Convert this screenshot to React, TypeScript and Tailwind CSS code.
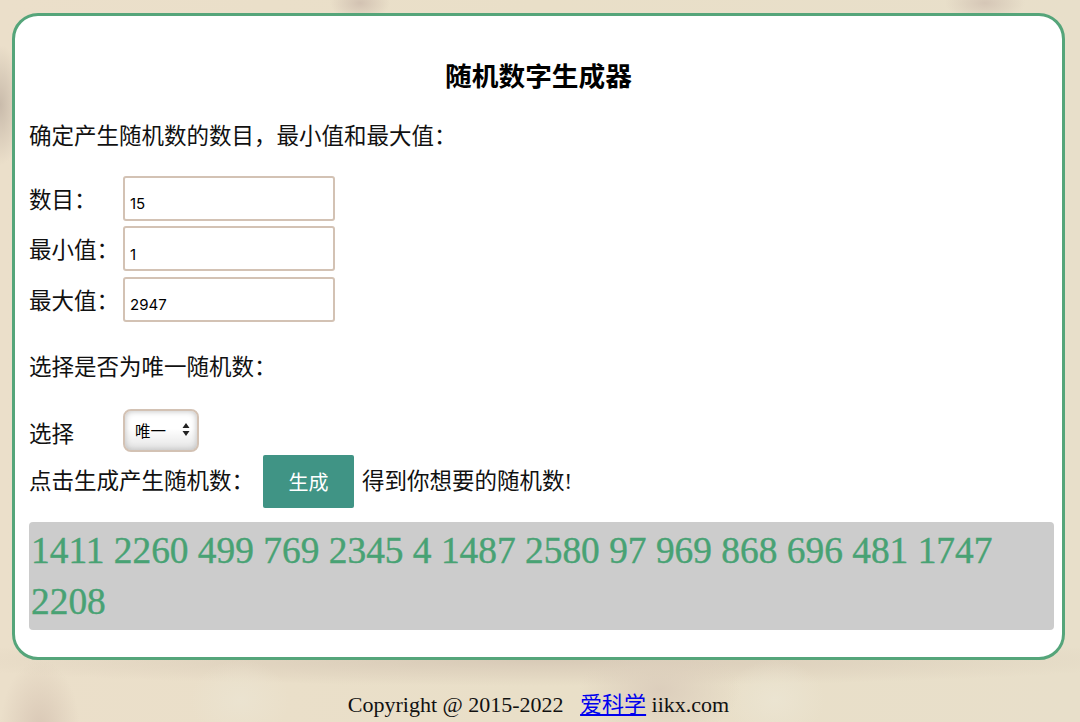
const serif = "font-['Liberation_Serif','Noto_Sans_CJK_SC',serif]";

function Field({ label, value }: { label: string; value: string }) {
  return (
    <div className="flex items-center h-[50.5px]">
      <label className="w-[94px] text-[22.5px] leading-none mt-[5px]">{label}</label>
      <input
        defaultValue={value}
        className="w-[212px] h-[45px] bg-white border-2 border-[#d3c2b4] rounded-[3px] px-[5px] pt-[11px] text-[15px] text-black font-['Inter','Noto_Sans',sans-serif] outline-none"
      />
    </div>
  );
}

export default function App() {
  return (
    <div
      className={`${serif} min-h-[722px] h-[722px] overflow-hidden text-[#111] pt-[13px] px-[12px] bg-[#e9dfc9] bg-[radial-gradient(ellipse_24px_60px_at_0px_105px,#c9bbab,transparent),radial-gradient(ellipse_30px_18px_at_360px_3px,#d2c2b2,transparent),radial-gradient(ellipse_40px_18px_at_985px_3px,#d5c6b6,transparent),radial-gradient(ellipse_40px_70px_at_40px_730px,#d9c8b6,transparent),radial-gradient(ellipse_80px_50px_at_660px_690px,#dccebc,transparent),radial-gradient(ellipse_50px_40px_at_240px_700px,#ebe3d0,transparent),radial-gradient(ellipse_50px_40px_at_775px_700px,#ebe4d1,transparent),radial-gradient(ellipse_620px_26px_at_540px_660px,#d8cab7,transparent),linear-gradient(90deg,#ebdfca,#e9dfc8_50%,#e8dfca)]`}
    >
      <div className="w-[1053px] h-[647px] bg-white border-[3px] border-[#55a57a] rounded-[26px] px-[14px]">
        <h1 className="text-[26.7px] font-bold text-center leading-none text-black pt-[48px]">随机数字生成器</h1>
        <p className="text-[22.5px] leading-none mt-[35px]">确定产生随机数的数目，最小值和最大值：</p>

        <div className="mt-[25px]">
          <Field label="数目：" value="15" />
          <Field label="最小值：" value="1" />
          <Field label="最大值：" value="2947" />
        </div>

        <p className="text-[22.5px] leading-none mt-[32px]">选择是否为唯一随机数：</p>

        <div className="flex items-center mt-[30px] h-[42px]">
          <label className="w-[94px] text-[22.5px] leading-none mt-[10px]">选择</label>
          <div className="relative w-[76px] h-[43px]">
            <select className="appearance-none w-full h-full rounded-[8px] border-2 border-[#d3c2b4] pl-[10px] text-[15.5px] text-black font-['Noto_Sans_CJK_SC',sans-serif] outline-none bg-[linear-gradient(180deg,#ffffff_45%,#e4e4e4)] shadow-[inset_0_0_6px_#bbb]">
              <option>唯一</option>
              <option>可重复</option>
            </select>
            <svg className="absolute right-[9px] top-[13px] pointer-events-none" width="8" height="15" viewBox="0 0 8 15">
              <path d="M4 1 7.5 6H.5zM4 14 .5 9h7z" fill="#222" />
            </svg>
          </div>
        </div>

        <div className="flex items-center mt-[4px] h-[53px]">
          <span className="w-[234px] text-[22.5px] leading-none mt-[2px]">点击生成产生随机数：</span>
          <button className="w-[91px] h-[53px] bg-[#409485] text-white rounded-[2px] text-[20px] font-['Noto_Sans_CJK_SC',sans-serif]">生成</button>
          <span className="ml-[8px] text-[22.5px] leading-none mt-[2px]">得到你想要的随机数!</span>
        </div>

        <div className="mt-[14px] -mr-[6px] h-[108px] bg-[#cccccc] rounded-[4px] pt-[3px] px-[2px] text-[37.4px] leading-[51px] text-[#48a274] [-webkit-text-stroke:0.4px_#48a274]">
          1411 2260 499 769 2345 4 1487 2580 97 969 868 696 481 1747 2208
        </div>
      </div>

      <p className="text-center text-[22px] leading-none mt-[34px] pr-[3px] text-[#111]">
        Copyright @ 2015-2022 &nbsp; <a href="#" className="text-[#0000ee] underline">爱科学</a> iikx.com
      </p>
    </div>
  );
}
